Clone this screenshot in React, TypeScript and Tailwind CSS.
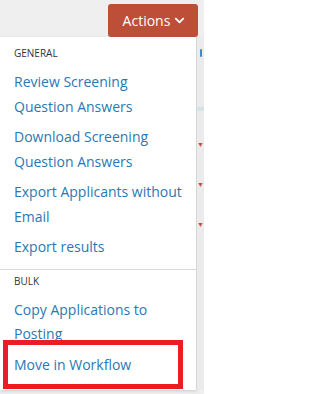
import { FaChevronDown } from "react-icons/fa"

const general = [
  "Review Screening Question Answers",
  "Download Screening Question Answers",
  "Export Applicants without Email",
  "Export results",
]

function MenuHeader({ label }: { label: string }) {
  return (
    <div className="px-[14px] pt-[2px] pb-[5px] text-[10px] leading-[18px] text-[#333] uppercase">
      {label}
    </div>
  )
}

function MenuItem({ label, highlight }: { label: string; highlight?: boolean }) {
  return (
    <div className="relative pl-[14px] pr-[10px] py-[3px] text-[14px] leading-[24.5px] text-[#2a78b4]">
      {label}
      {highlight && (
        <div className="absolute left-[3px] top-[-9.5px] w-[180px] h-[49px] border-[5px] border-[#ec1c24]" />
      )}
    </div>
  )
}

export default function App() {
  return (
    <div
      className="relative w-[204px] h-[394px] overflow-hidden bg-[#efefef]"
      style={{ fontFamily: '"Open Sans", "Liberation Sans", sans-serif' }}
    >
      <div className="flex h-[37px] justify-end pr-[6px] pt-[4px]">
        <button className="flex h-[33px] w-[90px] items-center justify-center gap-[4px] rounded-[3px] bg-[#bd4f39] pl-[2px] text-[14px] text-white">
          Actions
          <FaChevronDown className="h-[11px] w-[11px]" />
        </button>
      </div>

      <div className="flex">
        <div className="w-[199px] border-r border-[#d6d6d6] bg-white pt-[5px] pb-[10px] shadow-[0_1px_3px_rgba(0,0,0,0.15)]">
          <MenuHeader label="General" />
          {general.map((g) => (
            <MenuItem key={g} label={g} />
          ))}
          <div className="mt-[6px] h-px bg-[#d9d9d9]" />
          <MenuHeader label="Bulk" />
          <MenuItem label="Copy Applications to Posting" />
          <MenuItem label="Move in Workflow" highlight />
        </div>

        {/* sliver of the page behind the menu */}
        <div className="flex flex-1 flex-col items-center bg-[#ebebeb] pt-[12px]">
          <div className="h-[8px] w-[2px] rounded bg-[#3b8ad0]" />
          <div className="mt-[50px] h-[4px] w-full bg-[#d5e3e6]" />
          <div className="mt-[30px] text-[7px] leading-none text-[#c0503a]">▼</div>
          <div className="mt-[33px] text-[7px] leading-none text-[#c0503a]">▼</div>
          <div className="mt-[33px] text-[7px] leading-none text-[#c0503a]">▼</div>
        </div>
      </div>
    </div>
  )
}
